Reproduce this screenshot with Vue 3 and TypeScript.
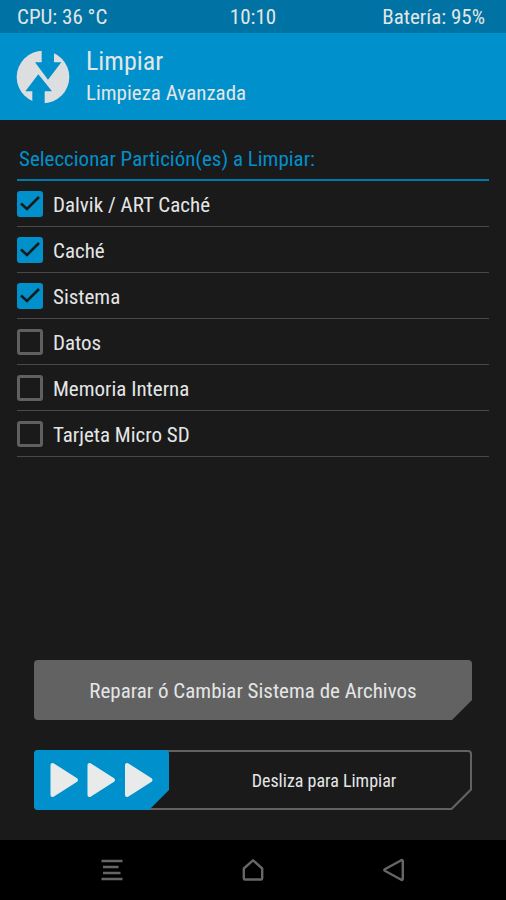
<script setup lang="ts">
import { computed, ref } from 'vue'

interface Partition {
  id: string
  label: string
  selected: boolean
}

const partitions = ref<Partition[]>([
  { id: 'dalvik', label: 'Dalvik / ART Caché', selected: true },
  { id: 'cache', label: 'Caché', selected: true },
  { id: 'system', label: 'Sistema', selected: true },
  { id: 'data', label: 'Datos', selected: false },
  { id: 'internal', label: 'Memoria Interna', selected: false },
  { id: 'sdcard', label: 'Tarjeta Micro SD', selected: false },
])

const swipe = ref(0)
const thumbStyle = computed(() => ({
  marginLeft: `calc((100% - 135px) * ${swipe.value / 100})`,
}))
</script>

<template>
  <div class="screen">
    <div class="status">
      <span>CPU: 36 °C</span>
      <span class="clock">10:10</span>
      <span class="battery">Batería: 95%</span>
    </div>

    <header class="header">
      <svg class="logo" viewBox="48 149 162 162" aria-hidden="true">
        <circle cx="129" cy="230" r="79" fill="#dcdee0" />
        <path d="M125 145H162V186H184L144 238L105 186H125Z" fill="#0090cb" />
        <path d="M97 315H134V273H156L115 222L76 273H97Z" fill="#0090cb" />
      </svg>
      <div class="titles">
        <h1>Limpiar</h1>
        <h2>Limpieza Avanzada</h2>
      </div>
    </header>

    <main class="content">
      <fieldset class="list">
        <legend>Seleccionar Partición(es) a Limpiar:</legend>
        <label v-for="p in partitions" :key="p.id" class="row" :for="p.id">
          <span class="tick">
            <input :id="p.id" v-model="p.selected" type="checkbox" />
            <svg v-if="p.selected" viewBox="0 0 26 26" aria-hidden="true">
              <path d="M4 12.5L10 18L22 6" fill="none" stroke="#1a1a1a" stroke-width="2.6" />
            </svg>
          </span>
          <span class="name">{{ p.label }}</span>
        </label>
      </fieldset>

      <div class="actions">
        <button class="repair" type="button">Reparar ó Cambiar Sistema de Archivos</button>
        <div class="swipe">
          <div class="track">
            <label for="swipe">Desliza para Limpiar</label>
          </div>
          <div class="thumb" :style="thumbStyle">
            <svg viewBox="0 0 135 60" aria-hidden="true">
              <g fill="#e9ebeb" stroke="#e9ebeb" stroke-width="4" stroke-linejoin="round">
                <path d="M18.5 15V45L42 30Z" />
                <path d="M55.5 15V45L79 30Z" />
                <path d="M93 15V45L116.5 30Z" />
              </g>
            </svg>
          </div>
          <input id="swipe" v-model.number="swipe" type="range" min="0" max="100" />
        </div>
      </div>
    </main>

    <nav class="nav">
      <button type="button" aria-label="Menú">
        <svg viewBox="0 0 24 24" aria-hidden="true">
          <path d="M1.5 3H22.5M3 9H18.5M3 15H20.5M1.5 21H22.5" />
        </svg>
      </button>
      <button type="button" aria-label="Inicio">
        <svg viewBox="0 0 24 24" aria-hidden="true">
          <path d="M12 2.3L21.2 10.5V20.2Q21.2 21.5 20 21.5H4Q2.8 21.5 2.8 20.2V10.5Z" />
        </svg>
      </button>
      <button type="button" aria-label="Atrás">
        <svg viewBox="0 0 24 24" aria-hidden="true">
          <path d="M2.8 11.3Q1.8 12 2.8 12.7L19.3 21.8Q20.8 22.4 20.8 20.8V3.2Q20.8 1.6 19.3 2.2Z" />
        </svg>
      </button>
    </nav>
  </div>
</template>

<style>
body {
  background: #1a1a1a;
}
</style>

<style scoped>
.screen {
  display: flex;
  flex-direction: column;
  min-height: 100vh;
  background: #1a1a1a;
  color: #e4e6e6;
  font-family: 'Roboto Condensed', 'Liberation Sans Narrow', Roboto, sans-serif;
  font-size: 21px;
  line-height: 24px;
}

.status {
  display: grid;
  grid-template-columns: 1fr auto 1fr;
  height: 33px;
  align-items: center;
  padding: 0 17px;
  background: #0073a4;
}

.battery {
  padding-right: 4px;
  text-align: right;
}

.header {
  display: flex;
  align-items: center;
  gap: 16px;
  height: 87px;
  padding: 0 16px;
  background: #0090cb;
}

.logo {
  width: 54px;
  height: 54px;
}

h1,
h2 {
  margin: 0;
  font-weight: 400;
  line-height: 32px;
}

h1 {
  font-size: 26px;
}

h2 {
  font-size: 21px;
}

.content {
  flex: 1;
  display: flex;
  flex-direction: column;
  justify-content: space-between;
}

.list {
  min-width: 0;
  margin: 0;
  padding: 0 17px;
  border: 0;
}

legend {
  box-sizing: border-box;
  width: 100%;
  padding: 27px 2px 8px;
  border-bottom: 2px solid #0079ab;
  color: #0090cb;
}

.row {
  display: flex;
  align-items: center;
  gap: 10px;
  height: 45px;
  border-bottom: 1px solid #4a4a4a;
}

.name {
  padding-top: 2px;
}

.tick {
  display: grid;
  width: 26px;
  height: 26px;
}

.tick > * {
  grid-area: 1 / 1;
}

.tick svg {
  pointer-events: none;
}

.tick input {
  appearance: none;
  box-sizing: border-box;
  width: 26px;
  height: 26px;
  margin: 0;
  border: 3px solid #606060;
  border-radius: 3px;
}

.tick input:checked {
  border-color: #0090cb;
  background: #0090cb;
}

.actions {
  display: grid;
  gap: 30px;
  padding: 30px 34px;
}

button {
  border: 0;
  padding: 0;
  color: inherit;
  font: inherit;
}

.repair,
.track,
.thumb {
  border-radius: 4px;
  clip-path: polygon(0 0, 100% 0, 100% calc(100% - 20px), calc(100% - 20px) 100%, 0 100%);
}

.repair {
  height: 60px;
  padding-top: 2px;
  background: #626262;
}

.swipe {
  display: grid;
  height: 60px;
}

.swipe > * {
  grid-area: 1 / 1;
}

.track {
  position: relative;
  display: grid;
  place-items: center;
  padding: 2px 0 0 142px;
  background: #626262;
  font-size: 18px;
}

.track::before {
  content: '';
  position: absolute;
  inset: 2px;
  border-radius: 2px;
  background: #1a1a1a;
  clip-path: polygon(0 0, 100% 0, 100% calc(100% - 19px), calc(100% - 19px) 100%, 0 100%);
}

.track label {
  position: relative;
}

.thumb {
  z-index: 1;
  width: 135px;
  height: 60px;
  background: #0090cb;
}

.swipe input {
  z-index: 2;
  width: 100%;
  height: 100%;
  margin: 0;
  opacity: 0;
}

.nav {
  display: grid;
  grid-template-columns: repeat(3, 1fr);
  height: 60px;
  padding: 0 42px;
  background: #000;
}

.nav button {
  display: grid;
  place-items: center;
  background: none;
}

.nav svg {
  width: 24px;
  height: 24px;
  fill: none;
  stroke: #666;
  stroke-width: 2.4;
  stroke-linejoin: round;
}
</style>
